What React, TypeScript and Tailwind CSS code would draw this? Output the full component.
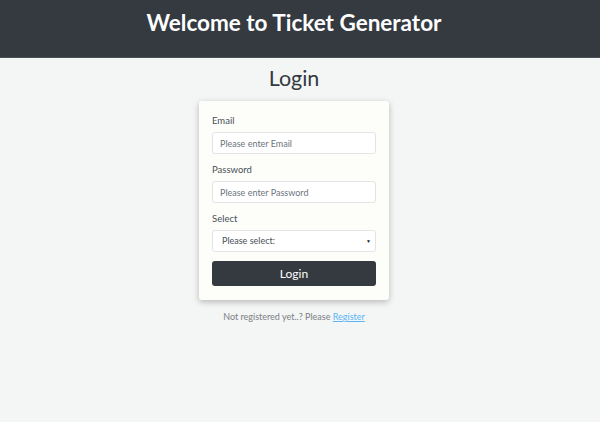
export default function App() {
  return (
    <div className="min-h-[422px] bg-[#f4f5f5] font-['Lato',sans-serif] text-[#343a40] pr-[12px]">
      {/* Top bar */}
      <header className="h-[58px] -mr-[12px] pr-[12px] pt-[8px] bg-[#343a40] border-b border-[#4a4f55] flex justify-center">
        <h1 className="text-[22.5px] leading-[30px] font-bold text-white">Welcome to Ticket Generator</h1>
      </header>

      <main className="flex flex-col items-center">
        <h2 className="text-[21.5px] leading-[26px] mt-[7px] mb-[10px]">Login</h2>

        <form className="w-[190px] bg-[#fdfdf9] rounded-[3px] shadow-[0_2px_6px_rgba(0,0,0,0.25)] px-[13px] pt-[14px] pb-[14px] flex flex-col">
          <label className="text-[9.5px] leading-[12px] text-[#495057] mb-[5px]">Email</label>
          <input
            className="h-[22px] rounded-[3px] border border-[#e2e4e6] bg-white px-[7px] text-[9px] placeholder:text-[#6c757d] mb-[10px]"
            placeholder="Please enter Email"
          />
          <label className="text-[9.5px] leading-[12px] text-[#495057] mb-[5px]">Password</label>
          <input
            type="password"
            className="h-[22px] rounded-[3px] border border-[#e2e4e6] bg-white px-[7px] text-[9px] placeholder:text-[#6c757d] mb-[10px]"
            placeholder="Please enter Password"
          />
          <label className="text-[9.5px] leading-[12px] text-[#495057] mb-[5px]">Select</label>
          <div className="relative h-[22px] rounded-[3px] border border-[#e2e4e6] bg-white flex items-center px-[9px] mb-[9px]">
            <span className="text-[9px] text-[#495057]">Please select:</span>
            <span className="absolute right-[4px] top-[7px] text-[5px] leading-[6px] text-[#222]">▼</span>
          </div>
          <button
            type="button"
            className="h-[25px] rounded-[3px] bg-[#343a40] text-white text-[12px]"
          >
            Login
          </button>
        </form>

        <p className="mt-[11px] text-[9px] leading-[12px] text-[#7a7f84]">
          Not registered yet..? Please{" "}
          <a className="text-[#5bb5f5] underline">Register</a>
        </p>
      </main>
    </div>
  );
}
